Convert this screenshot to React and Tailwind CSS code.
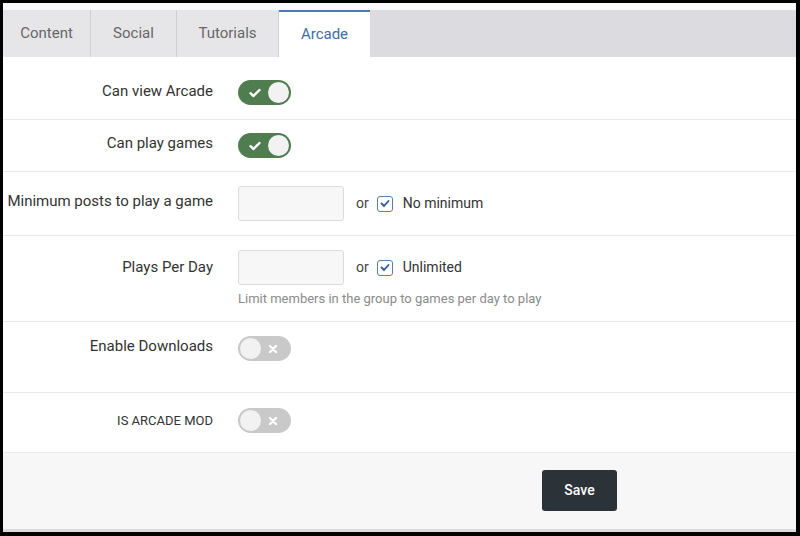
const F = { fontFamily: 'Roboto, "Liberation Sans", sans-serif' };

function On() {
  return (
    <div className="w-[53px] h-[25px] rounded-full bg-[#4f7d4f] flex items-center justify-between pl-[11px] pr-[2px]">
      <svg width="12" height="10" viewBox="0 0 12 10"><path d="M1.5 5.2 L4.5 8 L10.5 2" stroke="white" strokeWidth="2.4" fill="none" strokeLinecap="round" strokeLinejoin="round"/></svg>
      <div className="w-[21px] h-[21px] rounded-full bg-[#f2f2f2]" />
    </div>
  );
}
function Off() {
  return (
    <div className="w-[53px] h-[25px] rounded-full bg-[#c9c9c9] flex items-center justify-between pl-[2px] pr-[13px]">
      <div className="w-[21px] h-[21px] rounded-full bg-[#f2f2f2]" />
      <svg width="10" height="10" viewBox="0 0 10 10"><path d="M2 2 L8 8 M8 2 L2 8" stroke="white" strokeWidth="2.4" strokeLinecap="round"/></svg>
    </div>
  );
}
function Check() {
  return (
    <div className="w-[16px] h-[16px] rounded-[3px] border border-[#5a7da8] flex items-center justify-center bg-white">
      <svg width="10" height="9" viewBox="0 0 10 9"><path d="M1.5 4.5 L4 7 L8.5 2" stroke="#2e5b93" strokeWidth="1.8" fill="none" strokeLinecap="round" strokeLinejoin="round"/></svg>
    </div>
  );
}
function Row({ label, h, children, small, top }) {
  return (
    <div className={`flex border-b border-[#eaeaea] ${h}`}>
      <div className={`w-[210px] shrink-0 text-right whitespace-nowrap ${small ? 'text-[13px]' : 'text-[15px]'} text-[#333] ${top}`}>{label}</div>
      <div className={`pl-[25px] ${top}`}>{children}</div>
    </div>
  );
}

export default function App() {
  return (
    <div style={F} className="w-[800px] h-[536px] bg-black pl-[3px] pt-[3px] pr-[4px] pb-[4px]">
      <div className="h-full bg-white flex flex-col">
        <div className="h-[7px] bg-[#f9f9f9]" />
        <div className="h-[47px] bg-[#dcdce0] flex text-[15px] text-[#666]">
          <div className="w-[88px] flex items-center justify-center border-r border-[#d0d0d4] bg-[#e6e6e9]">Content</div>
          <div className="w-[86px] flex items-center justify-center border-r border-[#d0d0d4] bg-[#e6e6e9]">Social</div>
          <div className="w-[102px] flex items-center justify-center border-r border-[#d0d0d4] bg-[#e6e6e9]">Tutorials</div>
          <div className="w-[91px] flex items-center justify-center bg-white text-[#3d6e9f] border-t-2 border-[#4d7aa8]">Arcade</div>
        </div>
        <Row label="Can view Arcade" h="h-[63px]" top="pt-[23px]"><div className="mt-[0px]"><On /></div></Row>
        <Row label="Can play games" h="h-[52px]" top="pt-[12px]"><div className="mt-[1px]"><On /></div></Row>
        <Row label="Minimum posts to play a game" h="h-[64px]" top="pt-[18px]">
          <div className="flex items-center -mt-[4px]">
            <div className="w-[106px] h-[35px] rounded-[3px] border border-[#dcdcdc] bg-[#f7f7f7]" />
            <span className="ml-[12px] text-[14px] text-[#444]">or</span>
            <div className="ml-[8px]"><Check /></div>
            <span className="ml-[10px] text-[14px] text-[#333]">No minimum</span>
          </div>
        </Row>
        <Row label="Plays Per Day" h="h-[86px]" top="pt-[20px]">
          <div className="-mt-[6px]">
            <div className="flex items-center">
              <div className="w-[106px] h-[35px] rounded-[3px] border border-[#dcdcdc] bg-[#f7f7f7]" />
              <span className="ml-[12px] text-[14px] text-[#444]">or</span>
              <div className="ml-[8px]"><Check /></div>
              <span className="ml-[10px] text-[14px] text-[#333]">Unlimited</span>
            </div>
            <div className="mt-[4px] text-[13px] text-[#8a8a8a] whitespace-nowrap">Limit members in the group to games per day to play</div>
          </div>
        </Row>
        <Row label="Enable Downloads" h="h-[71px]" top="pt-[13px]"><div className="mt-[1px]"><Off /></div></Row>
        <Row label="IS ARCADE MOD" h="h-[60px]" small top="pt-[18px]"><div className="-mt-[3px]"><Off /></div></Row>
        <div className="flex-1 bg-[#f7f7f7] border-b-[3px] border-[#dcdcdc] flex pt-[17px]">
          <div className="ml-[539px] w-[75px] h-[41px] rounded-[3px] bg-[#2b3339] text-white text-[14px] font-medium flex items-center justify-center">Save</div>
        </div>
      </div>
    </div>
  );
}
